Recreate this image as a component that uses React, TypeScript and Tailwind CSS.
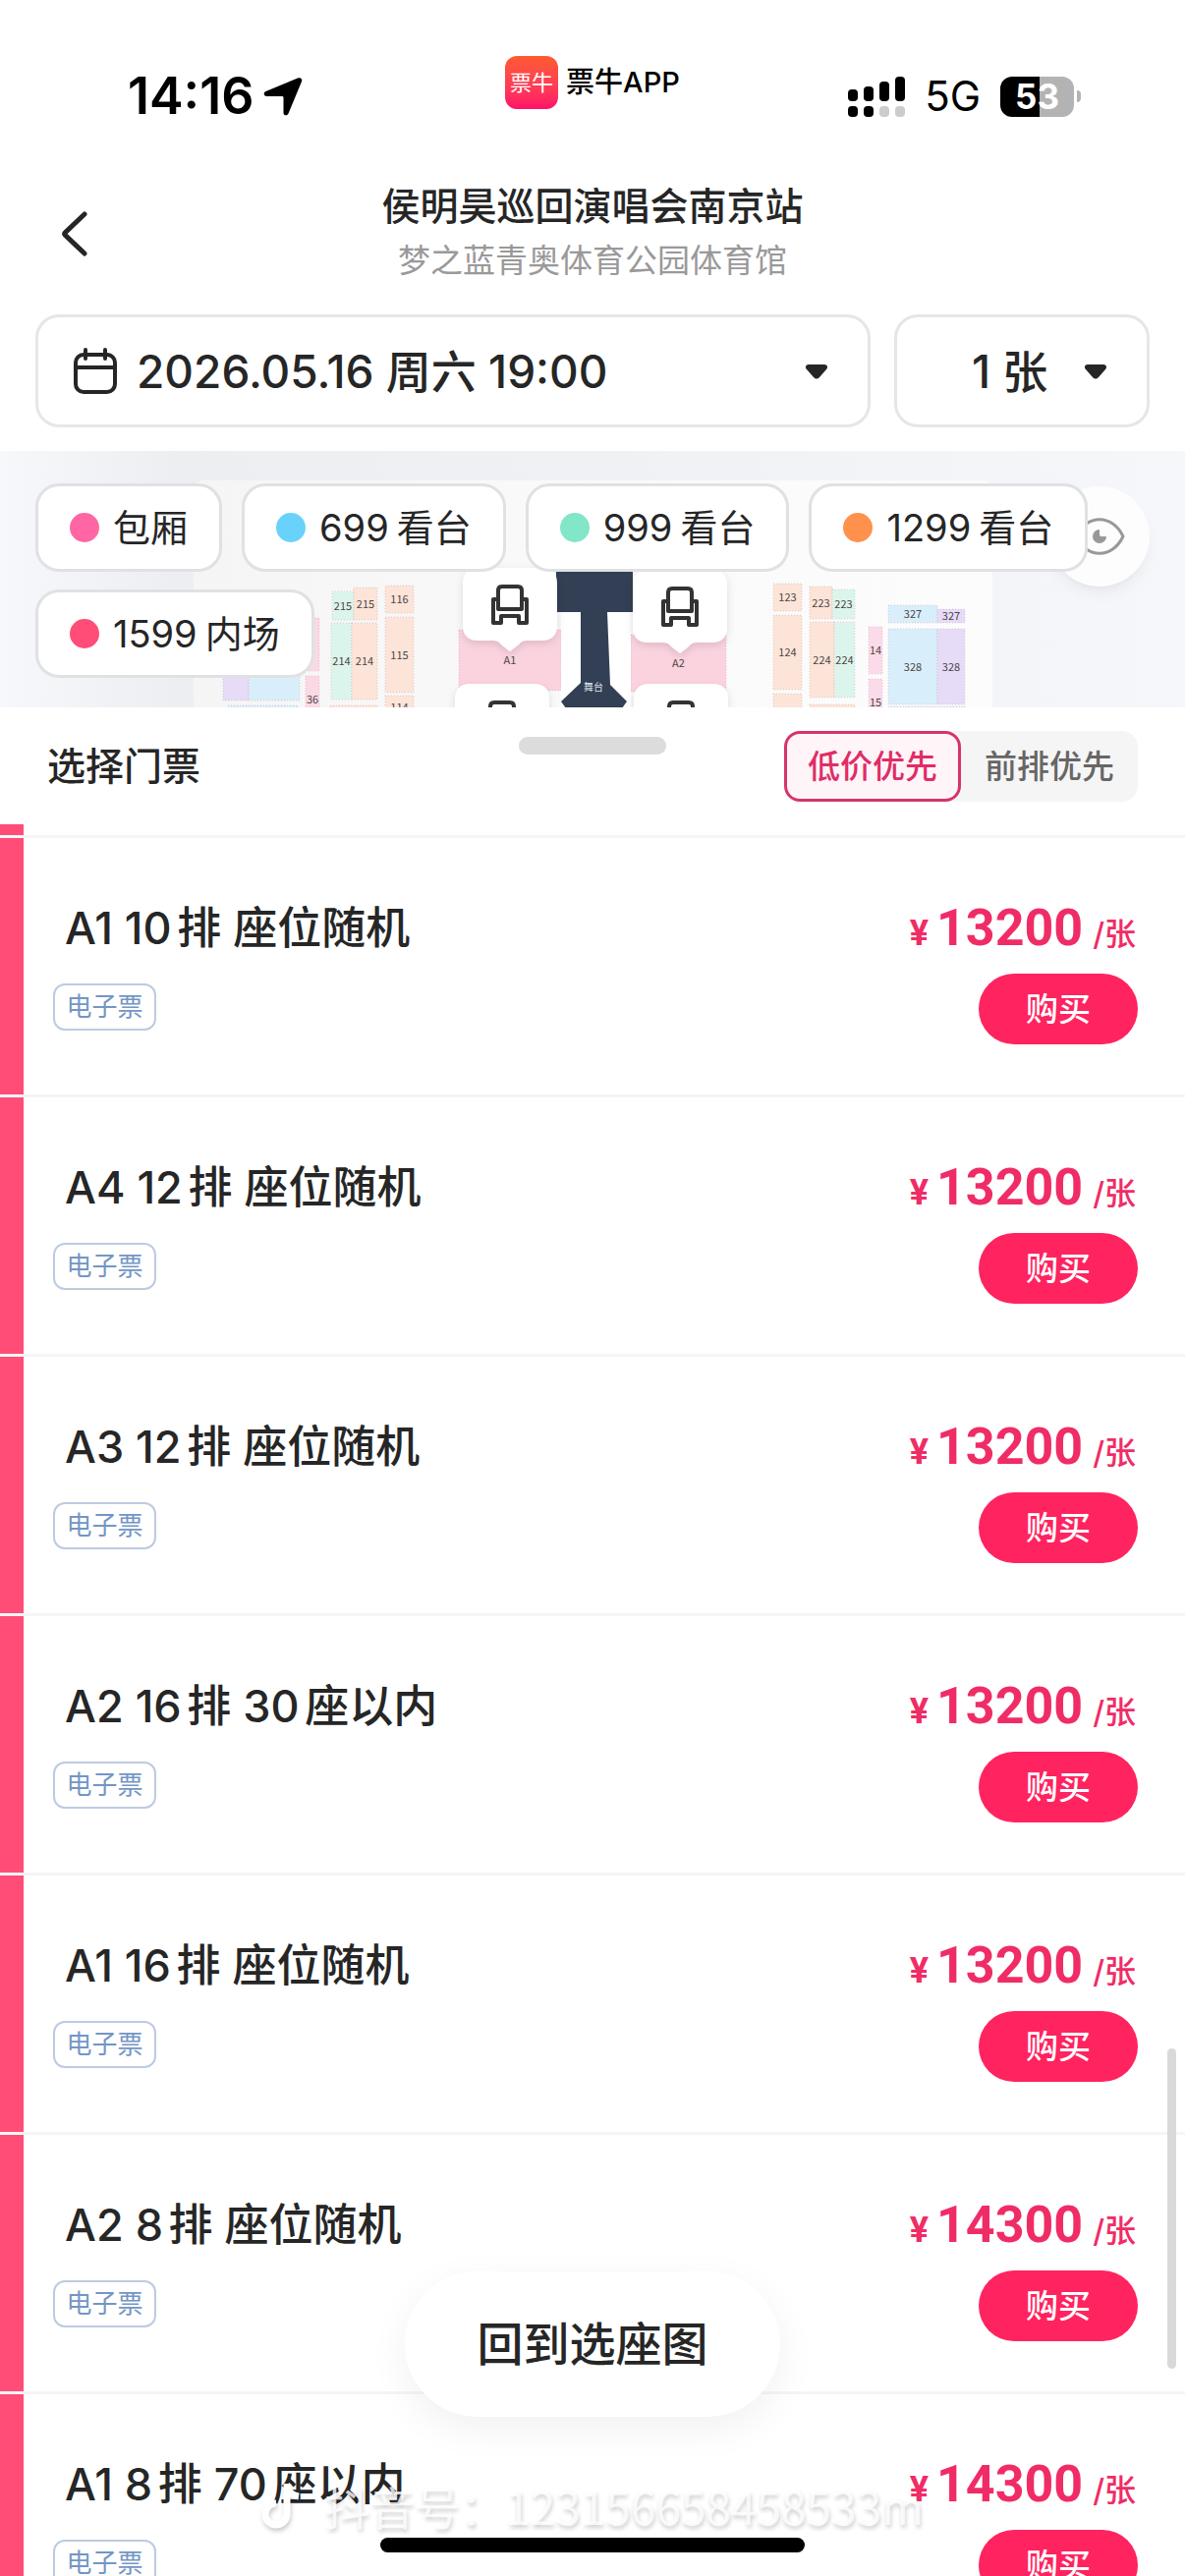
import React, { useState } from "react";

interface Tier {
  id: string;
  price?: string;
  label: string;
  dot: string;
}

interface Ticket {
  id: number;
  seat: string;
  price: number;
}

const tiers: Tier[] = [
  { id: "box", label: "包厢", dot: "bg-[#ff66a3]" },
  { id: "699", price: "699", label: "看台", dot: "bg-[#69d2fb]" },
  { id: "999", price: "999", label: "看台", dot: "bg-[#82e6c8]" },
  { id: "1299", price: "1299", label: "看台", dot: "bg-[#ff914d]" },
  { id: "1599", price: "1599", label: "内场", dot: "bg-[#ff4d78]" },
];

const tickets: Ticket[] = [
  { id: 1, seat: "A1 10排 座位随机", price: 13200 },
  { id: 2, seat: "A4 12排 座位随机", price: 13200 },
  { id: 3, seat: "A3 12排 座位随机", price: 13200 },
  { id: 4, seat: "A2 16排 30座以内", price: 13200 },
  { id: 5, seat: "A1 16排 座位随机", price: 13200 },
  { id: 6, seat: "A2 8排 座位随机", price: 14300 },
  { id: 7, seat: "A1 8排 70座以内", price: 14300 },
];

const Caret: React.FC = () => (
  <svg
    viewBox="0 0 24 16"
    className="pointer-events-none h-4 w-6 shrink-0 fill-[#262626]"
    aria-hidden="true"
  >
    <path d="M4 1h16c3 0 4 3 2 5l-7 8c-2 2-4 2-6 0L2 6C0 4 1 1 4 1z" />
  </svg>
);

const StatusBar: React.FC = () => (
  <div className="grid h-[167px] grid-cols-3 pt-[57px] text-black">
    <div className="flex h-[82px] items-center gap-2.5 pl-[130px]">
      <span className="text-[52px] leading-[56px] font-semibold">14:16</span>
      <svg viewBox="0 0 40 40" className="size-10" aria-hidden="true">
        <path
          d="M35 1.500c3-1.100 5 .7 4 3.500L25.500 37.500c-1.200 2.800-5 2.300-5-.8V21.500c0-1-.5-1.500-1.500-1.500H3.500c-3.200 0-3.800-3.800-1-5z"
        />
      </svg>
    </div>
    <div className="flex h-[54px] items-center justify-center gap-2">
      <div className="flex size-[54px] items-center justify-center rounded-xl bg-gradient-to-b from-[#ff5a30] to-[#ff0f68] text-[22px] leading-none text-white">
        票牛
      </div>
      <span className="text-[29px] leading-8 font-medium">票牛APP</span>
    </div>
    <div className="flex h-[82px] items-center justify-end gap-5 pr-[106px]">
      <svg viewBox="0 0 58 41" className="h-[41px] w-[58px]" aria-hidden="true">
        <rect x="0" y="13" width="10" height="12" rx="4" />
        <rect x="16" y="10" width="10" height="15" rx="4" />
        <rect x="32" y="5" width="10" height="20" rx="4" />
        <rect x="48" y="0" width="10" height="25" rx="4" />
        <rect x="0" y="30" width="10" height="11" rx="4" />
        <rect x="16" y="30" width="10" height="11" rx="4" />
        <rect x="32" y="30" width="10" height="11" rx="4" fill="#ccc" />
        <rect x="48" y="30" width="10" height="11" rx="4" fill="#ccc" />
      </svg>
      <span className="text-[42px] leading-[48px]">5G</span>
      <div className="flex items-center gap-[3px]">
        <div className="flex h-[41px] w-[75px] items-center justify-center rounded-xl bg-gradient-to-r from-black from-53% to-[#b3b3b3] to-53% text-[35px] leading-none font-bold text-white">
          53
        </div>
        <div className="h-3 w-1 rounded-r-full bg-[#b3b3b3]" />
      </div>
    </div>
  </div>
);

const Header: React.FC = () => (
  <header className="grid grid-cols-[150px_1fr_150px] items-center pt-[21px]">
    <button type="button" aria-label="返回" className="flex pl-[60px]">
      <svg viewBox="0 0 30 48" className="h-12 w-[30px]" fill="none">
        <path
          d="M26 4L7 22c-2 1.500-2 2.500 0 4l19 18"
          stroke="#262626"
          strokeWidth="5"
          strokeLinecap="round"
        />
      </svg>
    </button>
    <div className="text-center">
      <h1 className="text-[39px] leading-[44px] font-medium text-[#262626]">
        侯明昊巡回演唱会南京站
      </h1>
      <p className="mt-2.5 text-[33px] leading-[46px] text-[#999]">
        梦之蓝青奥体育公园体育馆
      </p>
    </div>
  </header>
);

const Filters: React.FC = () => (
  <div className="mt-8 flex gap-6 px-9 pb-6">
    <div className="flex h-[115px] flex-1 items-center rounded-3xl border-3 border-[#e6e6e6] pr-10 pl-9">
      <svg
        viewBox="0 0 44 48"
        className="h-12 w-11 shrink-0"
        fill="none"
        stroke="#262626"
        strokeWidth="4"
        strokeLinecap="round"
        aria-hidden="true"
      >
        <rect x="2" y="7" width="40" height="38" rx="8" />
        <path d="M2 20h40M12 2v9M32 2v9" />
      </svg>
      <select
        aria-label="场次"
        className="ml-5 h-[72px] min-w-0 flex-1 appearance-none bg-transparent text-[46px] leading-[64px] font-medium text-[#262626]"
      >
        <option>2026.05.16 周六 19:00</option>
      </select>
      <Caret />
    </div>
    <div className="flex h-[115px] w-[260px] items-center rounded-3xl border-3 border-[#e6e6e6] pr-10 pl-[76px]">
      <select
        aria-label="张数"
        className="h-[72px] min-w-0 flex-1 appearance-none bg-transparent text-[46px] leading-[64px] font-medium text-[#262626]"
      >
        <option>1 张</option>
      </select>
      <Caret />
    </div>
  </div>
);

// [x, y, width, height, fill, label]
type Block = [number, number, number, number, string, string?];

const PEACH = "#fce4d8";
const MINT = "#dcf5ec";
const PINK = "#fbd9e4";
const SKY = "#d9eefb";
const LILAC = "#e6dcf8";

const blocks: Block[] = [
  [338, 143, 22, 29, MINT, "215"],
  [360, 139, 24, 33, PEACH, "215"],
  [337, 175, 21, 78, MINT, "214"],
  [358, 175, 26, 78, PEACH, "214"],
  [336, 259, 48, 10, PEACH],
  [392, 137, 29, 28, PEACH, "116"],
  [392, 169, 29, 77, PEACH, "115"],
  [392, 249, 29, 24, PEACH, "114"],
  [227, 210, 26, 44, LILAC],
  [253, 210, 52, 44, SKY],
  [232, 259, 71, 10, SKY],
  [311, 170, 14, 54, PINK],
  [311, 229, 14, 48, PINK, "36"],
  [467, 182, 104, 62, "#fad3df", "A1"],
  [642, 187, 97, 58, "#fad3df", "A2"],
  [787, 135, 29, 28, PEACH, "123"],
  [787, 167, 29, 76, PEACH, "124"],
  [787, 247, 29, 30, PEACH],
  [824, 138, 23, 33, PEACH, "223"],
  [847, 141, 23, 30, MINT, "223"],
  [824, 174, 25, 77, PEACH, "224"],
  [849, 174, 21, 77, MINT, "224"],
  [824, 258, 46, 10, PEACH],
  [884, 179, 14, 48, "#fbdbe9", "14"],
  [884, 232, 14, 48, "#fbdbe9", "15"],
  [904, 157, 50, 18, SKY, "327"],
  [954, 161, 28, 14, LILAC, "327"],
  [904, 181, 50, 77, SKY, "328"],
  [954, 181, 28, 77, LILAC, "328"],
  [904, 260, 78, 10, SKY],
];

const SeatMarker: React.FC<{ x: number; y: number }> = ({ x, y }) => (
  <g transform={`translate(${x} ${y})`}>
    <path
      d="M-32 -84h64q16 0 16 16v42q0 16-16 16h-16q-4 0-7 4l-9 7-9-7q-3-4-7-4h-16q-16 0-16-16v-42q0-16 16-16z"
      fill="#fff"
      filter="url(#pin-shadow)"
    />
    <path
      d="M-12 -52v-9q0-4 4-4H8q4 0 4 4v9M-12 -52h-5v24h8v-7H9v7h8v-24h-5v10H-12z"
      fill="none"
      stroke="#333"
      strokeWidth="4"
      strokeLinejoin="round"
    />
  </g>
);

const SeatMap: React.FC = () => (
  <svg
    viewBox="0 0 1206 261"
    preserveAspectRatio="xMidYMid slice"
    className="absolute inset-0 size-full font-['Noto_Sans_CJK_SC',sans-serif]"
    aria-hidden="true"
  >
    <defs>
      <filter id="pin-shadow" x="-30%" y="-30%" width="160%" height="160%">
        <feDropShadow dx="0" dy="3" stdDeviation="4" floodOpacity="0.12" />
      </filter>
      <linearGradient id="map-bg" x1="0" x2="1" y1="0" y2="0">
        <stop offset="0" stopColor="#f6f8fc" />
        <stop offset="0.150" stopColor="#edeef1" />
        <stop offset="0.600" stopColor="#f1f2f5" />
        <stop offset="1" stopColor="#f5f7fb" />
      </linearGradient>
      <linearGradient id="floor" x1="0" x2="1" y1="0" y2="0">
        <stop offset="0" stopColor="#f5f5f6" />
        <stop offset="0.500" stopColor="#fafafa" />
        <stop offset="1" stopColor="#fcfcfd" />
      </linearGradient>
    </defs>
    <rect width="1206" height="261" fill="url(#map-bg)" />
    <rect x="197" y="30" width="813" height="260" rx="10" fill="url(#floor)" />
    {blocks.map(([x, y, w, h, fill, label], i) => (
      <g key={i}>
        <rect x={x} y={y} width={w} height={h} fill={fill} />
        <rect
          x={x}
          y={y}
          width={w}
          height={h}
          fill="none"
          stroke="#c98b8b"
          strokeOpacity="0.4"
          strokeDasharray="1 2"
        />
        {label && (
          <text
            x={x + w / 2}
            y={y + h / 2 + 4}
            fontSize="11"
            textAnchor="middle"
            fill="#4d4444"
          >
            {label}
          </text>
        )}
      </g>
    ))}
    <path d="M571 164h71v98h-71z" fill="#fff" />
    <path
      d="M566 100h78v64h-26l3 74 17 17-5 7h-57l-5-7 20-19v-72h-25z"
      fill="#323f54"
    />
    <text x="604" y="244" fontSize="10" textAnchor="middle" fill="#dfe3ea">
      舞台
    </text>
    <SeatMarker x={519} y={203} />
    <SeatMarker x={692} y={205} />
    <SeatMarker x={511} y={321} />
    <SeatMarker x={693} y={321} />
  </svg>
);

const MapPanel: React.FC = () => (
  <section className="relative h-[261px] overflow-hidden">
    <SeatMap />
    <button
      type="button"
      aria-label="显示座位图"
      className="absolute top-9 right-9 flex size-[102px] items-center justify-center rounded-full bg-[#fdfdfe] shadow-lg shadow-black/5"
    >
      <svg viewBox="0 0 52 40" className="h-10 w-[52px]" fill="none">
        <path
          d="M2 20C13 -3 39 -3 50 20C39 43 13 43 2 20z"
          stroke="#999"
          strokeWidth="3"
          strokeLinejoin="round"
        />
        <path d="M26 13a7 7 0 1 0 7 7h-5a2 2 0 0 1-2-2z" fill="#999" />
      </svg>
    </button>
    <div className="relative flex flex-wrap gap-x-5 gap-y-[18px] px-9 pt-[33px]">
      {tiers.map((tier) => (
        <button
          key={tier.id}
          type="button"
          className="flex h-[90px] items-center gap-3.5 rounded-3xl border-3 border-[#e0e1e3] bg-white px-8 text-[38px] leading-[48px] text-[#262626]"
        >
          <span className={`size-[30px] rounded-full ${tier.dot}`} />
          <span className="flex items-center gap-2">
            {tier.price && <span>{tier.price}</span>}
            <span>{tier.label}</span>
          </span>
        </button>
      ))}
    </div>
  </section>
);

const SheetHeader: React.FC = () => {
  const [sort, setSort] = useState<"price" | "row">("price");
  const options = [
    { key: "price" as const, label: "低价优先" },
    { key: "row" as const, label: "前排优先" },
  ];

  return (
    <div className="relative flex h-[119px] shrink-0 items-start justify-between bg-white pt-6 pr-12 pl-12">
      <h2 className="text-[39px] leading-[72px] font-medium text-[#262626]">
        选择门票
      </h2>
      <div className="absolute top-[30px] left-1/2 h-[18px] w-[150px] -translate-x-1/2 rounded-full bg-[#dcdcdc]" />
      <div className="flex h-[72px] rounded-2xl bg-[#f5f5f5]">
        {options.map((o) => (
          <button
            key={o.key}
            type="button"
            onClick={() => setSort(o.key)}
            className={
              sort === o.key
                ? "w-[180px] rounded-2xl border-3 border-[#d6336c] bg-[#fff5f9] text-[33px] leading-none font-medium text-[#e02d66]"
                : "w-[180px] rounded-2xl text-[33px] leading-none font-medium text-[#666]"
            }
          >
            {o.label}
          </button>
        ))}
      </div>
    </div>
  );
};

const TicketRow: React.FC<{ ticket: Ticket }> = ({ ticket }) => (
  <li className="flex h-[264px] border-b-3 border-[#f5f5f5]">
    <div className="w-6 shrink-0 bg-[#ff4d78]" />
    <div className="flex flex-1 justify-between pt-[62px] pr-12 pl-[30px]">
      <div>
        <h3 className="pl-3 text-[45px] leading-[60px] font-medium text-[#262626] [text-autospace:normal]">
          {ticket.seat}
        </h3>
        <span className="mt-[26px] flex h-12 w-[105px] items-center justify-center rounded-xl border-2 border-[#bccbe0] text-[26px] leading-none text-[#7396c4]">
          电子票
        </span>
      </div>
      <div className="flex flex-col items-end">
        <p className="flex h-[60px] items-baseline pr-0.5 leading-[60px] text-[#f02c66]">
          <span className="mr-2 font-[Roboto] text-[36px] font-bold">¥</span>
          <span className="mr-2.5 font-[Roboto] text-[52px] font-bold">
            {ticket.price}
          </span>
          <span className="text-[32px] font-medium">/张</span>
        </p>
        <button
          type="button"
          className="mt-4 h-[72px] w-[162px] rounded-full bg-[#ff235f] text-[33px] leading-none font-medium text-white"
        >
          购买
        </button>
      </div>
    </div>
  </li>
);

const Watermark: React.FC = () => (
  <div className="pointer-events-none absolute inset-x-0 bottom-11 flex items-center justify-center gap-6 font-['Noto_Sans_CJK_SC',sans-serif] text-[46px] leading-[56px] text-white/80 [text-shadow:1px_3px_4px_rgba(0,0,0,0.2)]">
    <svg
      viewBox="0 0 40 48"
      className="h-12 w-10 drop-shadow-[1px_3px_2px_rgba(0,0,0,0.2)]"
      fill="none"
      stroke="#fff"
      strokeWidth="7"
      aria-hidden="true"
    >
      <path d="M26 2v31a11 11 0 1 1-11-11M26 3c1 7 5 11 12 12" />
    </svg>
    <span>抖音号：123156658458533m</span>
  </div>
);

const App: React.FC = () => {
  return (
    <div className="relative flex h-screen flex-col overflow-hidden bg-white font-[Inter,'Noto_Sans_CJK_SC',sans-serif]">
      <StatusBar />
      <Header />
      <Filters />
      <MapPanel />
      <SheetHeader />
      <ul className="min-h-0 flex-1 overflow-hidden">
        <li className="h-3.5 border-b-3 border-[#f5f5f5]">
          <div className="h-full w-6 bg-[#ff4d78]" />
        </li>
        {tickets.map((ticket) => (
          <TicketRow key={ticket.id} ticket={ticket} />
        ))}
      </ul>

      <div className="absolute right-[9px] bottom-[211px] h-[326px] w-[9px] rounded-full bg-[#d9d9d9]" />
      <button
        type="button"
        className="absolute bottom-[162px] left-1/2 h-[148px] w-[382px] -translate-x-1/2 rounded-full bg-white text-[47px] font-medium text-[#262626] shadow-[0_12px_40px_rgba(0,0,0,0.06)]"
      >
        回到选座图
      </button>
      <Watermark />
      <div className="absolute bottom-6 left-1/2 h-[15px] w-[432px] -translate-x-1/2 rounded-full bg-black" />
    </div>
  );
};

export default App;
